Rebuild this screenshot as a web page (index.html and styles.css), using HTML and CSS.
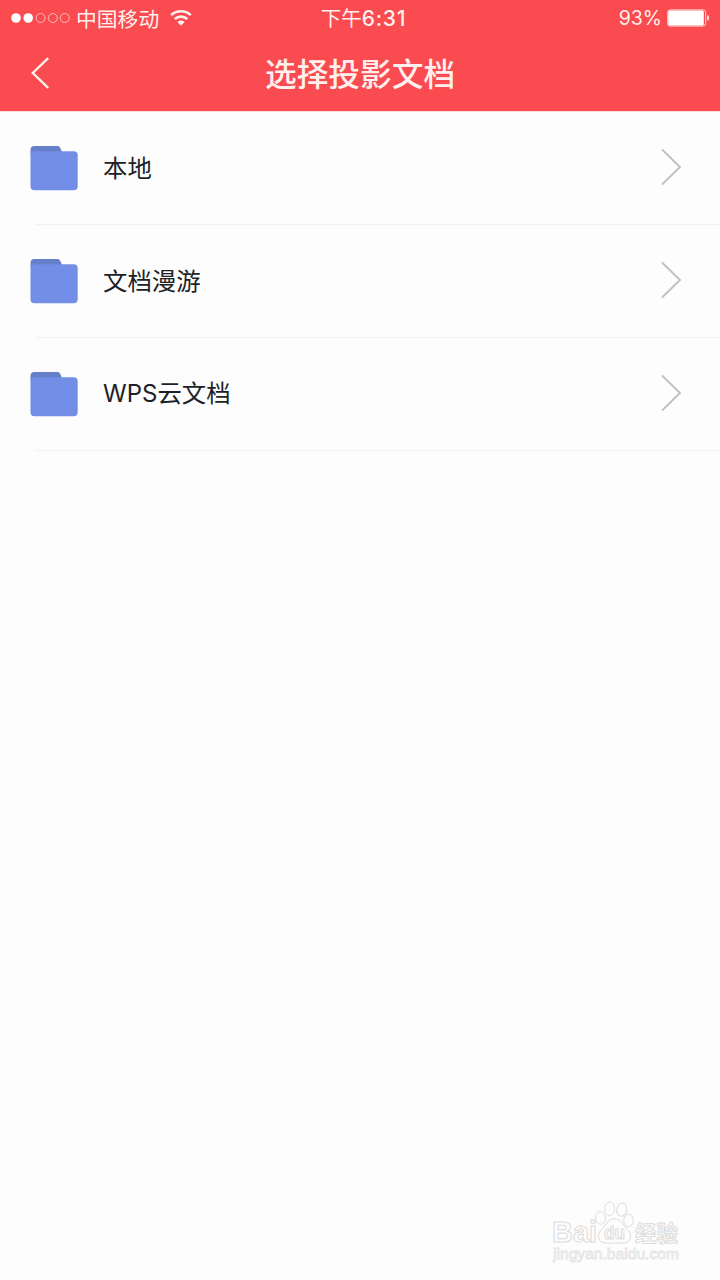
FILE: index.html
```html
<!DOCTYPE html>
<html lang="zh-CN">
<head>
  <meta charset="UTF-8">
  <meta name="viewport" content="width=device-width, initial-scale=1.0">
  <title>选择投影文档</title>
  <link rel="stylesheet" href="styles.css">
</head>
<body>
  <div class="header">
    <div class="status-bar">
      <div class="status-left">
        <svg class="signal" width="60" height="12" viewBox="0 0 60 12">
          <circle cx="5" cy="6" r="4.8" fill="#fff"/>
          <circle cx="17.2" cy="6" r="4.8" fill="#fff"/>
          <g fill="none" stroke="#fdb9b9" stroke-width="1">
            <circle cx="29.6" cy="6" r="4.5"/>
            <circle cx="41.8" cy="6" r="4.5"/>
            <circle cx="53.8" cy="6" r="4.5"/>
          </g>
        </svg>
        <span class="carrier">中国移动</span>
        <svg class="wifi" width="22" height="18" viewBox="0 0 22 18">
          <g fill="none" stroke="#fff0ee" stroke-width="2.6">
            <path d="M1.2 6.1C6.7 1 15.3 1 20.8 6.1"/>
            <path d="M4.7 10C8.3 6.8 13.7 6.8 17.3 10"/>
          </g>
          <path d="M7.4 13C9.5 11 12.5 11 14.6 13L11 16.8Z" fill="#fff0ee"/>
        </svg>
      </div>
      <div class="time">下午<b>6:31</b></div>
      <div class="status-right">
        <span class="percent">93%</span>
        <svg width="43" height="18" viewBox="0 0 43 18">
          <rect x="0.7" y="0.9" width="38" height="16.2" rx="2.5" fill="none" stroke="#ffd6d4" stroke-width="1"/>
          <rect x="1.2" y="1.6" width="35.6" height="14.8" rx="1.5" fill="#fff"/>
          <path d="M40.2 6C42.8 6.6 42.8 11.4 40.2 12Z" fill="#ffe4e2"/>
        </svg>
      </div>
    </div>
    <div class="nav-bar">
      <a href="#" class="back">
        <svg width="20" height="34" viewBox="0 0 20 34">
          <path d="M18.2 2.2L2.8 17L18.2 31.8" fill="none" stroke="#fff0ee" stroke-width="2.4"/>
        </svg>
      </a>
      <h1>选择投影文档</h1>
    </div>
  </div>

  <svg class="symbols">
    <symbol id="folder" viewBox="0 0 48 46">
      <path d="M0.5 9V5Q0.5 1 4.5 1H27.5Q29.5 1 30.3 3L32 7V9H0.5Z" fill="#657fc9"/>
      <path d="M0.5 8.5Q1 6.3 3.5 6.3H43.7Q47.7 6.3 47.7 10.3V41.2Q47.7 45.2 43.7 45.2H4.5Q0.5 45.2 0.5 41.2Z" fill="#728ee6"/>
    </symbol>
    <symbol id="arrow" viewBox="0 0 22 38">
      <path d="M2 1.5L20 19L2 36.5" fill="none" stroke="#c2bec5" stroke-width="1.9"/>
    </symbol>
  </svg>

  <div class="list">
    <a href="#" class="item">
      <svg class="folder"><use href="#folder"/></svg>
      <span class="name">本地</span>
      <svg class="arrow"><use href="#arrow"/></svg>
    </a>
    <a href="#" class="item">
      <svg class="folder"><use href="#folder"/></svg>
      <span class="name">文档漫游</span>
      <svg class="arrow"><use href="#arrow"/></svg>
    </a>
    <a href="#" class="item">
      <svg class="folder"><use href="#folder"/></svg>
      <span class="name"><span class="latin">WPS</span>云文档</span>
      <svg class="arrow"><use href="#arrow"/></svg>
    </a>
  </div>

  <div class="watermark">
    <svg width="136" height="66" viewBox="0 0 136 66">
      <g class="mark">
        <text class="brand" x="2" y="42" textLength="45" lengthAdjust="spacingAndGlyphs">Bai</text>
        <ellipse cx="50.5" cy="18" rx="5" ry="6.3"/>
        <ellipse cx="59.7" cy="8.7" rx="5" ry="6.7"/>
        <ellipse cx="71.8" cy="9.7" rx="5" ry="6.7" transform="rotate(10 71.8 9.7)"/>
        <ellipse cx="78.5" cy="20.5" rx="4.8" ry="6.3"/>
        <path d="M56 24C60 17 69 17 73 24C76 29 81 31 80.5 37C80 43 75 43.5 64.5 43C54 43.5 49 43 48.5 37C48 31 53 29 56 24Z"/>
        <text class="du" x="54" y="39" textLength="21" lengthAdjust="spacingAndGlyphs">du</text>
        <text class="brand-cn" x="85" y="41" textLength="43" lengthAdjust="spacingAndGlyphs">经验</text>
      </g>
      <text class="site" x="3" y="59" textLength="126" lengthAdjust="spacingAndGlyphs">jingyan.baidu.com</text>
    </svg>
  </div>
</body>
</html>
```

FILE: styles.css
```css
body {
  margin: 0;
  min-height: 1280px;
  background-color: #fdfdfd;
  font-family: "Noto Sans CJK SC", sans-serif;
  color: #201f27;
}
svg {
  display: block;
  flex-shrink: 0;
}
.header {
  height: 111px;
  background-color: #fa4b50;
  border-bottom: 1px solid #fbdcdd;
  color: #fff0ee;
}
.status-bar {
  display: grid;
  grid-template-columns: 1fr auto 1fr;
  align-items: center;
  height: 35px;
  padding: 0 10px 0 11px;
  font-size: 20.8px;
  line-height: 34px;
}
.status-left, .status-right {
  display: flex;
  align-items: center;
}
.status-right {
  justify-content: flex-end;
  gap: 5px;
}
.carrier {
  margin: 0 11px 0 5px;
}
.time {
  padding-left: 6px;
  font-size: 20.5px;
}
.time b {
  font-family: Inter, sans-serif;
  font-weight: 500;
  font-size: 21px;
  letter-spacing: 0.7px;
}
.percent {
  font-family: Inter, sans-serif;
  font-size: 19.5px;
}
.nav-bar {
  display: grid;
  grid-template-columns: 60px 1fr 60px;
  align-items: center;
  height: 75px;
}
.back {
  padding-left: 30px;
}
h1 {
  margin: 0;
  text-align: center;
  font-size: 31.7px;
  font-weight: 500;
  line-height: 75px;
}
.symbols {
  display: none;
}
.item {
  display: flex;
  align-items: center;
  height: 112px;
  padding: 0 38px 0 30px;
  border-bottom: 1px solid;
  border-image: linear-gradient(to right, transparent 36px, #f2f1f4 36px) 1;
  color: inherit;
  text-decoration: none;
}
.folder {
  width: 48px;
  height: 46px;
}
.name {
  flex: 1;
  margin: 0 0 2px 25px;
  font-size: 24.4px;
  line-height: 36px;
}
.latin {
  font-family: Inter, sans-serif;
  font-size: 24px;
}
.arrow {
  width: 22px;
  height: 38px;
  margin-bottom: 2px;
}
.watermark {
  position: absolute;
  left: 550px;
  top: 1200px;
}
.mark {
  fill: #fdfdfd;
  stroke: #dcdcdc;
  stroke-width: 1;
}
.brand {
  font: bold 29px "Liberation Sans", sans-serif;
}
.du {
  font: bold 18px "Liberation Sans", sans-serif;
}
.brand-cn {
  font: bold 22px "Noto Sans CJK SC", sans-serif;
}
.site {
  font: 14px "Liberation Sans", sans-serif;
  fill: #fdfdfd;
  stroke: #e4e4e4;
  stroke-width: 0.8;
}
```
